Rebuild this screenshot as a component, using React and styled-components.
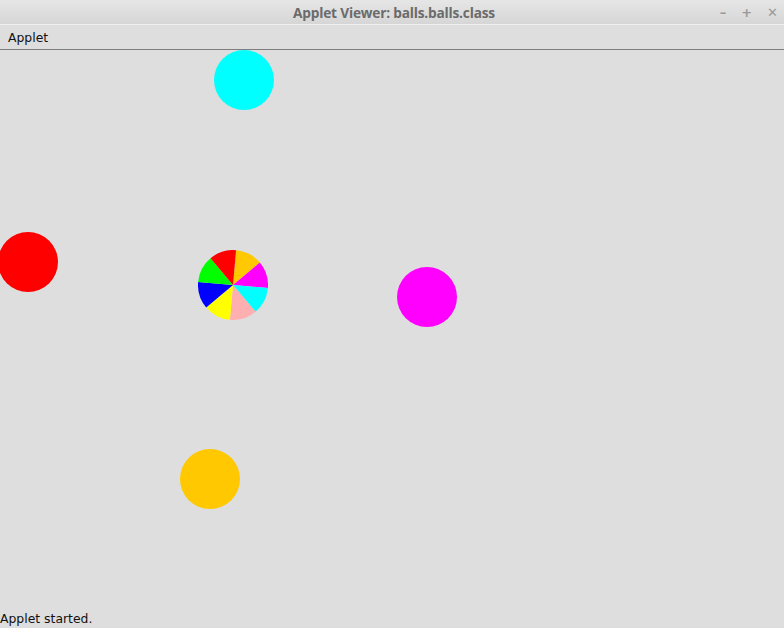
import React from "react";
import styled, { createGlobalStyle } from "styled-components";

const GlobalStyle = createGlobalStyle`
  html, body { margin: 0; padding: 0; }
  body { background: #dedede; overflow: hidden; }
`;

const Frame = styled.div`
  width: 784px;
  height: 628px;
  display: flex;
  flex-direction: column;
  background: #dedede;
  font-family: "DejaVu Sans", sans-serif;
`;

const TitleBar = styled.div`
  height: 24px;
  flex: none;
  display: flex;
  align-items: center;
  justify-content: center;
  position: relative;
  background: linear-gradient(#e6e6e6, #d6d6d6);
  border-bottom: 1px solid #f0f0f0;
`;

const Title = styled.span`
  font-family: "Open Sans", sans-serif;
  font-weight: 700;
  font-size: 13.7px;
  color: #6b6b6b;
  letter-spacing: -0.2px;
  margin-left: 4px;
`;

const Controls = styled.div`
  position: absolute;
  right: 6px;
  top: 0;
  height: 24px;
  display: flex;
  align-items: center;
  gap: 15px;
  color: #9a9a9a;
  font-family: "DejaVu Sans", sans-serif;
  font-weight: 700;
  font-size: 13px;
`;

const MenuBar = styled.div`
  height: 24px;
  flex: none;
  display: flex;
  align-items: center;
  padding-left: 8px;
  border-bottom: 1px solid #7e7e7e;
  font-size: 12.4px;
  color: #111;
`;

const Canvas = styled.div`
  flex: 1;
  position: relative;
  overflow: hidden;
`;

const Ball = styled.div`
  position: absolute;
  width: 60px;
  height: 60px;
  border-radius: 50%;
  left: ${(p) => p.$x}px;
  top: ${(p) => p.$y}px;
  background: ${(p) => p.$color};
`;

const Wheel = styled.svg`
  position: absolute;
  left: ${(p) => p.$x}px;
  top: ${(p) => p.$y}px;
`;

const Status = styled.div`
  height: 20px;
  flex: none;
  display: flex;
  align-items: center;
  font-size: 12.4px;
  color: #111;
  padding-top: 1px;
`;

const sliceColors = ["#ffc800", "#ff00ff", "#00ffff", "#ffafaf", "#ffff00", "#0000ff", "#00ff00", "#ff0000"];

function PieWheel({ x, y }) {
  const r = 35;
  const c = 35;
  const start = -85;
  const slices = sliceColors.map((col, i) => {
    const a0 = ((start + i * 45) * Math.PI) / 180;
    const a1 = ((start + (i + 1) * 45) * Math.PI) / 180;
    const x0 = c + r * Math.cos(a0);
    const y0 = c + r * Math.sin(a0);
    const x1 = c + r * Math.cos(a1);
    const y1 = c + r * Math.sin(a1);
    return <path key={i} d={`M${c} ${c} L${x0} ${y0} A${r} ${r} 0 0 1 ${x1} ${y1} Z`} fill={col} />;
  });
  return (
    <Wheel $x={x} $y={y} width="70" height="70" viewBox="0 0 70 70">
      {slices}
    </Wheel>
  );
}

export default function App() {
  return (
    <Frame>
      <GlobalStyle />
      <TitleBar>
        <Title>Applet Viewer: balls.balls.class</Title>
        <Controls>
          <span>–</span>
          <span>+</span>
          <span>✕</span>
        </Controls>
      </TitleBar>
      <MenuBar>Applet</MenuBar>
      <Canvas>
        <Ball $x={214} $y={0} $color="#00ffff" />
        <Ball $x={-2} $y={182} $color="#ff0000" />
        <Ball $x={397} $y={217} $color="#ff00ff" />
        <Ball $x={180} $y={399} $color="#ffc800" />
        <PieWheel x={198} y={200} />
      </Canvas>
      <Status>Applet started.</Status>
    </Frame>
  );
}
